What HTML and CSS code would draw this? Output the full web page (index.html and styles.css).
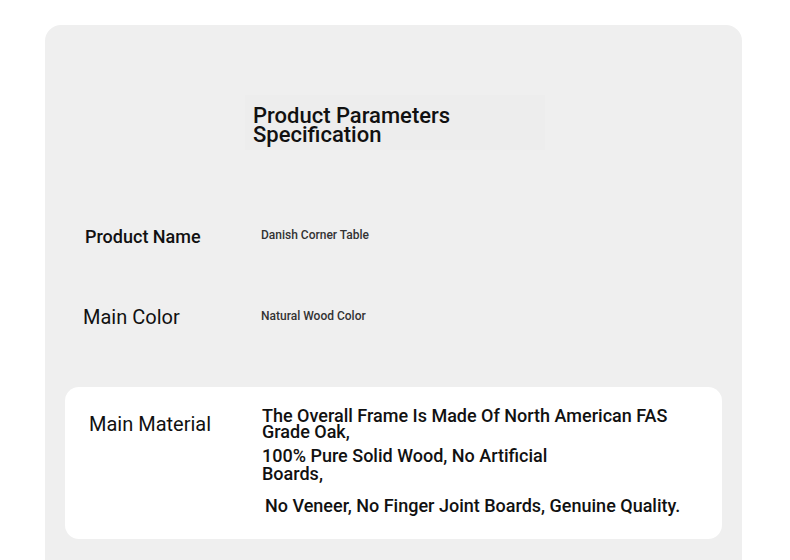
FILE: index.html
```html
<!DOCTYPE html>
<html>
<head>
<meta charset="utf-8">
<link rel="stylesheet" href="styles.css">
</head>
<body>
<div class="panel">
  <div class="title-box">
    <h1 class="title">Product Parameters<br>Specification</h1>
  </div>
  <div class="row row-name">
    <div class="label label-name">Product Name</div>
    <div class="value">Danish Corner Table</div>
  </div>
  <div class="row row-color">
    <div class="label label-color">Main Color</div>
    <div class="value">Natural Wood Color</div>
  </div>
  <div class="card">
    <div class="label label-material">Main Material</div>
    <div class="material">
      <p class="mline mline-first">The Overall Frame Is Made Of North American FAS<br>Grade Oak,</p>
      <p class="mline mline-second">100% Pure Solid Wood, No Artificial<br>Boards,</p>
      <p class="mline mline-last">No Veneer, No Finger Joint Boards, Genuine Quality.</p>
    </div>
  </div>
</div>
</body>
</html>
```
FILE: styles.css
```css
* { box-sizing: border-box; }
html, body { margin: 0; padding: 0; background: #ffffff; }
body {
  font-family: Roboto, "Liberation Sans", sans-serif;
  color: #111111;
  height: 560px;
  overflow: hidden;
}
.panel {
  margin: 25px 0 0 45px;
  width: 697px;
  height: 600px;
  background: #efefef;
  border-radius: 16px 16px 0 0;
  padding: 70px 20px 0 20px;
}
.title-box {
  margin-left: 180px;
  width: 300px;
  height: 55px;
  padding: 11px 8px 0 8px;
  background: #ededed;
}
.title {
  margin: 0;
  font-size: 22px;
  font-weight: 500;
  line-height: 19px;
  color: #111;
}
.row {
  display: flex;
  align-items: center;
}
.row-name { margin-top: 71px; height: 30px; }
.row-color { margin-top: 51px; height: 30px; }
.label { color: #111; }
.label-name {
  width: 196px;
  padding-left: 20px;
  font-size: 18px;
  font-weight: 500;
}
.label-color {
  width: 196px;
  padding-left: 18px;
  font-size: 20px;
}
.value {
  font-size: 12px;
  font-weight: 500;
  color: #333;
}
.row-name .value { margin-top: -3px; }
.row-color .value { margin-top: -3px; }
.card {
  margin-top: 55px;
  background: #ffffff;
  border-radius: 14px;
  height: 152px;
  display: flex;
  padding: 20px 0 0 24px;
}
.label-material {
  width: 173px;
  font-size: 20px;
  padding-top: 5px;
}
.material {
  font-size: 18px;
  font-weight: 500;
  letter-spacing: 0;
}
.mline {
  margin: 0;
  line-height: 16px;
}
.mline-first { margin-top: 1px; }
.mline-second { margin-top: 7px; line-height: 18px; }
.mline-last { margin-top: 14px; padding-left: 3px; line-height: 18px; }
```
